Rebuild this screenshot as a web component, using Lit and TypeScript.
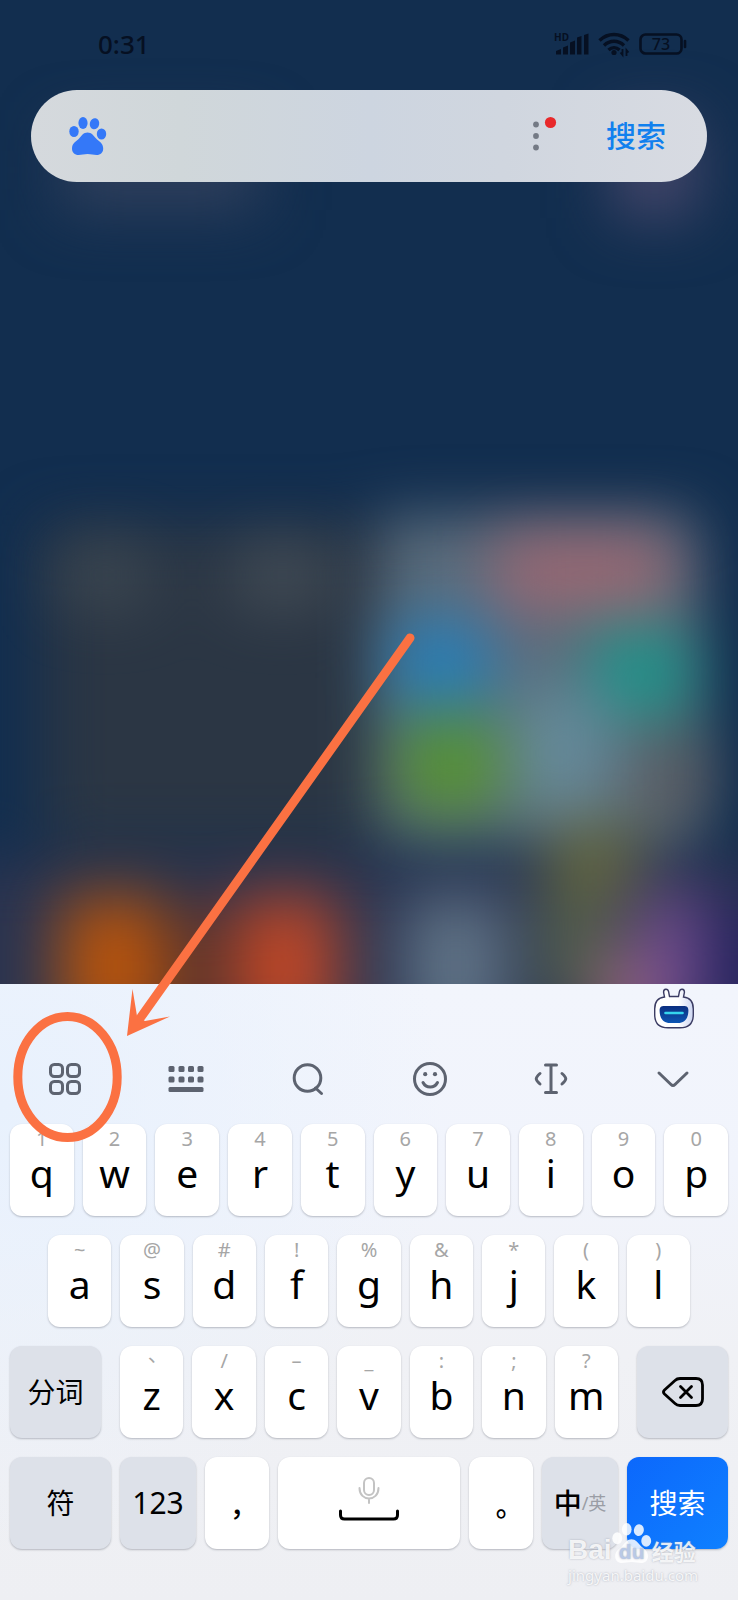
import { LitElement, html, css, svg } from "lit";
import { customElement, property } from "lit/decorators.js";

type KeyDef = [label: string, hint: string];

const TOP_ROW: KeyDef[] = [
  ["q", "1"], ["w", "2"], ["e", "3"], ["r", "4"], ["t", "5"],
  ["y", "6"], ["u", "7"], ["i", "8"], ["o", "9"], ["p", "0"],
];
const HOME_ROW: KeyDef[] = [
  ["a", "~"], ["s", "@"], ["d", "#"], ["f", "!"], ["g", "%"],
  ["h", "&"], ["j", "*"], ["k", "("], ["l", ")"],
];
const BOTTOM_ROW: KeyDef[] = [
  ["z", "、"], ["x", "/"], ["c", "–"], ["v", "_"], ["b", ":"], ["n", ";"], ["m", "?"],
];

const pawPads = svg`
  <ellipse cx="5" cy="14.500" rx="4.700" ry="5.600"/>
  <ellipse cx="14" cy="6" rx="4.600" ry="5.900"/>
  <ellipse cx="25.500" cy="6.800" rx="4.700" ry="5.600" transform="rotate(12 25.500 6.800)"/>
  <ellipse cx="32.500" cy="17" rx="4.700" ry="5.600"/>`;
const pawBody = svg`
  <path d="M18.500 15.500c-4 0-5.700 3-8.200 5.800C7.300 24.500 3 26.300 3 31.500c0 4 2.600 6.500 6.600 6.500 3 0 5.600-.9 9-.9s6 .9 9 .9c4 0 6.600-2.500 6.600-6.500 0-5.200-4.200-7-7.300-10.200-2.500-2.800-4.400-5.800-8.400-5.800z"/>`;

/** One letter key with its long-press symbol. */
@customElement("letter-key")
export class LetterKey extends LitElement {
  @property() label = "";
  @property() hint = "";

  static styles = css`
    :host { display: block; min-width: 0; }
    .key {
      box-sizing: border-box;
      display: flex;
      flex-direction: column;
      align-items: center;
      width: 100%;
      height: 92px;
      margin: 0;
      padding: 3px 0 0;
      border: 0;
      border-radius: 12px;
      background: #fff;
      box-shadow: 0 1px 2px rgba(60, 64, 80, 0.32);
      font-family: "Noto Sans", "Noto Sans CJK TC", sans-serif;
      color: #000;
    }
    .hint { font-size: 20px; line-height: 24px; color: #a6a6a6; }
    .label { font-size: 39px; line-height: 44px; }
  `;

  render() {
    return html`<button class="key" type="button">
      <span class="hint">${this.hint}</span>
      <span class="label">${this.label}</span>
    </button>`;
  }
}

/** Blurred home screen behind the search bar. */
@customElement("home-backdrop")
export class HomeBackdrop extends LitElement {
  static styles = css`
    :host { display: block; }
    .art { display: block; width: 100%; height: 100%; }
  `;

  render() {
    return html`<svg class="art" viewBox="0 0 738 984" preserveAspectRatio="none" aria-hidden="true">
      <defs>
        <filter id="wide" filterUnits="userSpaceOnUse" x="-150" y="-100" width="1040" height="1350" color-interpolation-filters="sRGB">
          <feGaussianBlur stdDeviation="30"/>
        </filter>
        <filter id="mid" filterUnits="userSpaceOnUse" x="-150" y="-100" width="1040" height="1350" color-interpolation-filters="sRGB">
          <feGaussianBlur stdDeviation="32"/>
        </filter>
      </defs>
      <rect width="738" height="984" fill="#122e4f"/>
      <g filter="url(#wide)">
        <rect x="60" y="130" width="200" height="80" fill="#2f3f5c"/>
        <rect x="612" y="120" width="86" height="98" fill="#44466a"/>
        <rect x="42" y="526" width="340" height="320" fill="#2b3644"/>
        <rect x="380" y="516" width="316" height="324" fill="#5a6c7c"/>
        <rect x="-100" y="860" width="940" height="300" fill="#2a3450"/>
      </g>
      <g filter="url(#mid)" opacity="0.84">
        <rect x="60" y="545" width="90" height="60" fill="#424d56"/>
        <rect x="235" y="545" width="95" height="60" fill="#4b545c"/>
        <rect x="494" y="536" width="176" height="72" fill="#ab6670"/>
        <rect x="392" y="620" width="98" height="86" fill="#1b82c4"/>
        <rect x="592" y="628" width="98" height="88" fill="#109c8c"/>
        <rect x="400" y="718" width="100" height="94" fill="#559c22"/>
        <rect x="515" y="690" width="94" height="120" fill="#6890a0"/>
        <rect x="640" y="730" width="65" height="94" fill="#5d5a5c"/>
        <rect x="548" y="822" width="90" height="74" fill="#73713a"/>
        <rect x="545" y="896" width="64" height="110" fill="#5e6c4c"/>
        <rect x="60" y="896" width="104" height="140" fill="#d25a00"/>
        <rect x="164" y="910" width="70" height="130" fill="#5e3226"/>
        <rect x="234" y="896" width="104" height="140" fill="#d84a20"/>
        <rect x="404" y="896" width="104" height="140" fill="#697e90"/>
        <rect x="604" y="950" width="56" height="90" fill="#c07084"/>
        <rect x="640" y="890" width="62" height="140" fill="#7f519c"/>
        <rect x="708" y="900" width="90" height="150" fill="#242060"/>
      </g>
    </svg>`;
  }
}

@customElement("app-root")
export class AppRoot extends LitElement {
  static styles = css`
    :host {
      display: block;
      font-family: "Noto Sans", "Noto Sans CJK SC", sans-serif;
    }
    .screen {
      position: relative;
      display: flex;
      flex-direction: column;
      min-height: 100vh;
      overflow: hidden;
    }
    button { font-family: inherit; margin: 0; border: 0; padding: 0; background: none; }

    .home { position: relative; flex: 1; min-height: 400px; background: #122e4f; }
    .backdrop { position: absolute; inset: 0; }
    .front { position: relative; padding: 0 31px; }

    .status {
      display: flex;
      align-items: center;
      justify-content: space-between;
      height: 88px;
      margin-bottom: 2px;
      padding: 0 20px 0 67px;
      color: #061022;
    }
    .time { font-size: 26px; font-weight: 500; }
    .indicators { display: flex; align-items: center; gap: 9px; }
    .indicators svg { display: block; overflow: visible; }
    .tiny { font: 700 10px "Noto Sans", sans-serif; }
    .level { font: 500 16px "Noto Sans", sans-serif; }

    .search {
      display: flex;
      align-items: center;
      height: 92px;
      padding: 0 41px 0 38px;
      border-radius: 46px;
      background: linear-gradient(90deg, #d5d9dd, #d0d7da 22%, #cdd5e0 50%, #d0d6df 70%, #d8dbe2);
    }
    .search .paw { flex: none; fill: #3478f8; }
    .query {
      flex: 1;
      min-width: 0;
      height: 60px;
      padding: 0 12px;
      border: 0;
      outline: 0;
      background: transparent;
      font: 28px "Noto Sans", "Noto Sans CJK SC", sans-serif;
    }
    .more { display: block; }
    .more svg { display: block; }
    .go { margin-left: 48px; font-size: 30px; line-height: 44px; font-weight: 500; color: #1180ee; }

    .keyboard {
      padding: 0 10px 51px;
      background:
        radial-gradient(circle at 0% 20%, #e8f1fd, rgba(232, 241, 253, 0) 50%),
        linear-gradient(#f2f5fc, #f1f4fc 30%, #f0f1f5 60%, #eeeff3);
    }
    .assistant { display: flex; justify-content: flex-end; height: 46px; padding: 4px 34px 0 0; }
    .assistant svg { display: block; }
    .tools { display: grid; grid-template-columns: repeat(6, 1fr); height: 90px; margin: 0 -6px; }
    .tool { display: flex; align-items: center; justify-content: center; }
    .tool svg {
      fill: none;
      stroke: #5d6370;
      stroke-width: 3;
      stroke-linecap: round;
      stroke-linejoin: round;
    }
    .rows { display: grid; gap: 19px; }
    .row { display: grid; grid-auto-flow: column; grid-auto-columns: minmax(0, 1fr); gap: 9px; }
    .home-row { padding: 0 38px; }
    .split { display: grid; grid-template-columns: 91fr 498fr 91fr; gap: 19px; }
    .last { display: grid; grid-template-columns: 101fr 76fr 64fr 182fr 64fr 76fr 101fr; gap: 9px; }

    .wide {
      display: flex;
      align-items: center;
      justify-content: center;
      min-width: 0;
      height: 92px;
      border-radius: 12px;
      background: #dde1e9;
      box-shadow: 0 1px 2px rgba(60, 64, 80, 0.32);
      font-size: 28px;
      line-height: 40px;
      color: #000;
    }
    .light { background: #fff; }
    .number { font-size: 30px; }
    .mark { padding-top: 20px; font-family: "Noto Sans CJK TC", sans-serif; font-weight: 500; }
    .submit { background: linear-gradient(135deg, #0c68fc, #0f80ff); color: #fff; }
    .zh { font-weight: 500; }
    .en { font-size: 18px; color: #9a9da5; }

    .note { position: absolute; left: 0; bottom: 0; width: 100%; pointer-events: none; }
    .brand {
      position: absolute;
      right: 40px;
      bottom: 14px;
      color: rgba(255, 255, 255, 0.85);
      text-shadow: 0 0 2px rgba(140, 145, 160, 0.7);
      pointer-events: none;
    }
    .logo { display: flex; align-items: flex-end; height: 42px; font: 700 28px/28px "Liberation Sans", sans-serif; }
    .du { position: relative; width: 40px; height: 42px; }
    .du svg { display: block; }
    .du span { position: absolute; left: 0; right: 0; bottom: -2px; text-align: center; font-size: 21px; line-height: 28px; color: #b9c9e6; }
    .cn { font: 700 22px/28px "Noto Sans CJK SC", sans-serif; }
    .site { font: 15px/22px "Noto Sans", sans-serif; }
  `;

  private keys(defs: KeyDef[]) {
    return defs.map(([label, hint]) => html`<letter-key .label=${label} .hint=${hint}></letter-key>`);
  }

  render() {
    return html`<main class="screen">
      <section class="home">
        <home-backdrop class="backdrop"></home-backdrop>
        <div class="front">
          <div class="status">
            <span class="time">0:31</span>
            <div class="indicators">
              <svg width="35" height="24" viewBox="0 0 35 24" fill="currentColor">
                <text class="tiny" x="0" y="9">HD</text>
                <path d="M2 22.500v-3.500l5-2v5.500zM9 22.500v-7l5-2v9zM16 22.500V10.500l5-2v14zM23 22.500V5.500l4.500-1.500v18.500zM30 22.500V3l4.500-1.500v21z"/>
              </svg>
              <svg width="32" height="24" viewBox="0 0 32 24" fill="none" stroke="currentColor" stroke-width="3.400">
                <path d="M1.500 8.500C10 .5 22 .5 30.500 8.500M6 13.500c6-5.600 14-5.600 20 0M10.500 18c3.200-3 7.800-3 11 0"/>
                <circle cx="16" cy="20.500" r="2.600" fill="currentColor" stroke="none"/>
                <path d="M24.500 17v6l-2-2.500M28.500 24v-6l2 2.500" stroke-width="1.800"/>
              </svg>
              <svg width="48" height="22" viewBox="0 0 48 22" fill="none" stroke="currentColor" stroke-width="2.600">
                <rect x="1.500" y="1.500" width="41" height="19" rx="5"/>
                <path d="M46 8v6" stroke-linecap="round"/>
                <text class="level" x="22" y="17" text-anchor="middle" fill="currentColor" stroke="none">73</text>
              </svg>
            </div>
          </div>
          <form class="search" role="search" @submit=${(e: Event) => e.preventDefault()}>
            <svg class="paw" width="38" height="38" viewBox="0 0 38 38">${pawPads}${pawBody}</svg>
            <input class="query" type="text" aria-label="搜索" />
            <button class="more" type="button" aria-label="更多">
              <svg width="28" height="40" viewBox="0 0 28 40">
                <g fill="#747a85"><circle cx="6" cy="8.500" r="2.900"/><circle cx="6" cy="20" r="2.900"/><circle cx="6" cy="31.500" r="2.900"/></g>
                <circle cx="20.500" cy="6.500" r="5.600" fill="#e8292b"/>
              </svg>
            </button>
            <button class="go" type="submit">搜索</button>
          </form>
        </div>
      </section>

      <section class="keyboard">
        <div class="assistant">
          <svg width="40" height="41" viewBox="0 0 40 41">
            <defs>
              <linearGradient id="shell" x1="0" x2="1"><stop offset=".6" stop-color="#fff"/><stop offset="1" stop-color="#cdd6f2"/></linearGradient>
              <linearGradient id="visor" x1="0" y1="0" x2="0" y2="1"><stop offset="0" stop-color="#0b2f80"/><stop offset="1" stop-color="#0d56b4"/></linearGradient>
            </defs>
            <path d="M10.500 9 9.600 4.500c-.3-4 4.200-4.500 5-.8l.9 4.800h9l.9-4.800c.8-3.700 5.300-3.200 5 .8L29.500 9c6.500 .6 9.800 4.500 9.800 12v5.500c0 9-4.500 13.300-13.300 13.300H14c-8.800 0-13.300-4.300-13.300-13.300V21c0-7.500 3.300-11.400 9.800-12z" fill="url(#shell)" stroke="#3b3c63" stroke-width="1.400"/>
            <path d="M10.500 18h19c3.800 0 5 1.500 4.900 5-.3 8-4 12-10.400 12h-8c-6.400 0-10.100-4-10.400-12-.1-3.500 1.100-5 4.900-5z" fill="url(#visor)"/>
            <path d="M11.500 25h17" stroke="#35d5ee" stroke-width="2.600" stroke-linecap="round"/>
          </svg>
        </div>

        <div class="tools">
          <button class="tool" type="button" aria-label="功能">
            <svg width="34" height="34" viewBox="0 0 34 34">
              <rect x="2.500" y="2.500" width="12" height="12" rx="3.800"/><rect x="19.500" y="2.500" width="12" height="12" rx="3.800"/>
              <rect x="2.500" y="19.500" width="12" height="12" rx="3.800"/><rect x="19.500" y="19.500" width="12" height="12" rx="3.800"/>
            </svg>
          </button>
          <button class="tool" type="button" aria-label="键盘">
            <svg width="36" height="28" viewBox="0 0 36 28">
              <g fill="#5d6370" stroke="none">
                <rect x=".5" y="1" width="6" height="6" rx="1.500"/><rect x="10.500" y="1" width="6" height="6" rx="1.500"/><rect x="20" y="1" width="6" height="6" rx="1.500"/><rect x="29.500" y="1" width="6" height="6" rx="1.500"/>
                <rect x=".5" y="11.500" width="6" height="6" rx="1.500"/><rect x="10.500" y="11.500" width="6" height="6" rx="1.500"/><rect x="20" y="11.500" width="6" height="6" rx="1.500"/><rect x="29.500" y="11.500" width="6" height="6" rx="1.500"/>
                <rect x=".5" y="22" width="35" height="5" rx="1.500"/>
              </g>
            </svg>
          </button>
          <button class="tool" type="button" aria-label="搜索">
            <svg width="32" height="34" viewBox="0 0 32 34"><circle cx="15.500" cy="16" r="13.300"/><path d="m23.500 26 6 5.500"/></svg>
          </button>
          <button class="tool" type="button" aria-label="表情">
            <svg width="36" height="36" viewBox="0 0 36 36"><circle cx="18" cy="18" r="15.500"/><path d="M11 21.500c3 6 11.500 6 14.500 0"/><g fill="#5d6370" stroke="none"><circle cx="13.200" cy="13.200" r="2.100"/><circle cx="23" cy="13.200" r="2.100"/></g></svg>
          </button>
          <button class="tool" type="button" aria-label="光标">
            <svg width="36" height="34" viewBox="0 0 36 34"><path d="M18 3v27M12.500 3h11M12.500 30.500h11M7 11.500c-5 4.500-5 6 0 10.500M29 11.500c5 4.500 5 6 0 10.500"/></svg>
          </button>
          <button class="tool" type="button" aria-label="收起">
            <svg width="34" height="20" viewBox="0 0 34 20"><path d="m3 4 12 11.500q2 2 4 0L31 4"/></svg>
          </button>
        </div>

        <div class="rows">
          <div class="row">${this.keys(TOP_ROW)}</div>
          <div class="row home-row">${this.keys(HOME_ROW)}</div>
          <div class="split">
            <button class="wide" type="button">分词</button>
            <div class="row">${this.keys(BOTTOM_ROW)}</div>
            <button class="wide" type="button" aria-label="删除">
              <svg width="42" height="30" viewBox="0 0 42 30" fill="none" stroke="#000" stroke-width="2.800" stroke-linecap="round" stroke-linejoin="round">
                <path d="M2.500 13 13 3.500Q15 1.500 18 1.500h16q6.500 0 6.500 6.500v14q0 6.500-6.500 6.500H18q-3 0-5-2L2.500 17q-2-2 0-4z"/>
                <path d="m18.500 9.500 11 11M29.500 9.500l-11 11"/>
              </svg>
            </button>
          </div>
          <div class="last">
            <button class="wide" type="button">符</button>
            <button class="wide number" type="button">123</button>
            <button class="wide light mark" type="button">，</button>
            <button class="wide light" type="button" aria-label="空格">
              <svg width="60" height="54" viewBox="0 0 60 54" fill="none" stroke-linecap="round" stroke-linejoin="round">
                <g stroke="#c3c3c3" stroke-width="2"><rect x="25" y="2" width="10" height="17" rx="5"/><path d="M20.500 12c0 14 19 14 19 0M30 23v4"/></g>
                <path d="M1.500 35v4q0 4 4 4h49q4 0 4-4v-4" stroke="#000" stroke-width="3"/>
              </svg>
            </button>
            <button class="wide light mark" type="button">。</button>
            <button class="wide" type="button"><span class="zh">中</span><span class="en">/英</span></button>
            <button class="wide submit" type="button">搜索</button>
          </div>
        </div>
      </section>

      <svg class="note" viewBox="0 0 738 1600" aria-hidden="true">
        <ellipse cx="67.500" cy="1077" rx="49.700" ry="60.500" fill="none" stroke="#fb7142" stroke-width="9"/>
        <path d="M410 638 141 1017" stroke="#fb7142" stroke-width="9" stroke-linecap="round"/>
        <path d="m127 1036 5.500-47 4.500 27 8 5 25-4.500z" fill="#fb7142"/>
      </svg>

      <div class="brand">
        <div class="logo">
          <span>Bai</span>
          <div class="du">
            <svg width="40" height="42" viewBox="0 0 38 38" fill="currentColor">${pawPads}${pawBody}</svg>
            <span>du</span>
          </div>
          <span class="cn">经验</span>
        </div>
        <div class="site">jingyan.baidu.com</div>
      </div>
    </main>`;
  }
}
